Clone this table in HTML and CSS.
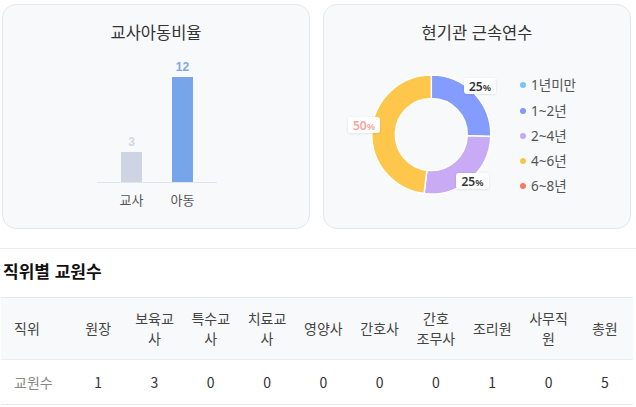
FILE: index.html
```html
<!DOCTYPE html>
<html lang="ko">
<head>
<meta charset="utf-8">
<title>교원 현황</title>
<link rel="stylesheet" href="styles.css">
</head>
<body>
<div class="charts">
  <section class="card">
    <h2 class="card-title">교사아동비율</h2>
    <svg class="chart" width="306" height="177" viewBox="0 0 306 177">
      <line x1="94" y1="131.5" x2="214" y2="131.5" stroke="#e1e4ea" stroke-width="1"/>
      <rect x="118" y="101" width="21" height="30" fill="#ced4e1"/>
      <rect x="169" y="26" width="21" height="105" fill="#76a6e9"/>
      <text class="val" x="128.5" y="95" fill="#d0d6e2">3</text>
      <text class="val" x="179.5" y="20" fill="#7fa7ea">12</text>
      <text class="axis" x="128.5" y="153.5">교사</text>
      <text class="axis" x="179.5" y="153.5">아동</text>
    </svg>
  </section>
  <section class="card">
    <h2 class="card-title">현기관 근속연수</h2>
    <svg class="chart" width="306" height="177" viewBox="0 0 306 177">
      <defs>
        <filter id="sh" x="-30%" y="-50%" width="160%" height="200%">
          <feDropShadow dx="0" dy="0.5" stdDeviation="1" flood-color="#000" flood-opacity="0.12"/>
        </filter>
      </defs>
      <g stroke="#ffffff" stroke-width="1.5" stroke-linejoin="round">
        <path d="M107.3 24 A59.5 59.5 0 0 1 166.76 85.58 L143.28 84.76 A36 36 0 0 0 107.3 47.5 Z" fill="#839cfd"/>
        <path d="M166.76 85.58 A59.5 59.5 0 0 1 100.05 142.56 L102.91 119.23 A36 36 0 0 0 143.28 84.76 Z" fill="#c8aaf5"/>
        <path d="M100.05 142.56 A59.5 59.5 0 0 1 107.3 24 L107.3 47.5 A36 36 0 0 0 102.91 119.23 Z" fill="#fec74c"/>
      </g>
      <rect x="140" y="27" width="32" height="16" rx="3" fill="#fff" filter="url(#sh)"/>
      <text class="pct" x="156" y="39.5" fill="#333">25<tspan class="pc">%</tspan></text>
      <rect x="132" y="122" width="33" height="16" rx="3" fill="#fff" filter="url(#sh)"/>
      <text class="pct" x="148.5" y="134.5" fill="#333">25<tspan class="pc">%</tspan></text>
      <rect x="24" y="66" width="32" height="16" rx="3" fill="#fff" filter="url(#sh)"/>
      <text class="pct" x="40" y="78.5" fill="#f7a39b">50<tspan class="pc">%</tspan></text>

      <circle cx="199" cy="34" r="3" fill="#7cc4fa"/>
      <text class="leg" x="207" y="39">1년미만</text>
      <circle cx="199" cy="60" r="3" fill="#8099fb"/>
      <text class="leg" x="207" y="65">1~2년</text>
      <circle cx="199" cy="85" r="3" fill="#c6a8f4"/>
      <text class="leg" x="207" y="90">2~4년</text>
      <circle cx="199" cy="110" r="3" fill="#fdc64b"/>
      <text class="leg" x="207" y="115">4~6년</text>
      <circle cx="199" cy="135" r="3" fill="#f87a63"/>
      <text class="leg" x="207" y="140">6~8년</text>
    </svg>
  </section>
</div>

<div class="divider"></div>

<h2 class="section-title">직위별 교원수</h2>

<table class="staff">
  <colgroup>
    <col class="c-first">
    <col><col><col><col><col><col><col><col><col><col>
  </colgroup>
  <thead>
    <tr>
      <th class="first">직위</th>
      <th>원장</th>
      <th>보육교사</th>
      <th>특수교사</th>
      <th>치료교사</th>
      <th>영양사</th>
      <th>간호사</th>
      <th class="keep">간호 조무사</th>
      <th>조리원</th>
      <th>사무직원</th>
      <th>총원</th>
    </tr>
  </thead>
  <tbody>
    <tr>
      <td class="first">교원수</td>
      <td>1</td>
      <td>3</td>
      <td>0</td>
      <td>0</td>
      <td>0</td>
      <td>0</td>
      <td>0</td>
      <td>1</td>
      <td>0</td>
      <td>5</td>
    </tr>
  </tbody>
</table>
</body>
</html>
```

FILE: styles.css
```css
* { box-sizing: border-box; }

body {
  margin: 0;
  background: #ffffff;
  font-family: "Noto Sans CJK KR", "Noto Sans", sans-serif;
  color: #333;
}

.charts {
  display: grid;
  grid-template-columns: 308px 308px;
  column-gap: 13px;
  padding: 4px 0 0 2px;
}

.card {
  height: 225px;
  background: #f8f9fb;
  border: 1px solid #e4e6ea;
  border-radius: 14px;
  overflow: hidden;
}

.card-title {
  margin: 0;
  padding: 16px 0 8px;
  height: 46px;
  font-size: 16.5px;
  line-height: 22px;
  font-weight: 400;
  text-align: center;
  color: #333;
}

.chart {
  display: block;
}

.val {
  font-family: "Liberation Sans", Arial, sans-serif;
  font-size: 12px;
  font-weight: 700;
  text-anchor: middle;
}

.axis {
  font-family: "Noto Sans CJK KR", sans-serif;
  font-size: 13px;
  fill: #555;
  text-anchor: middle;
}

.pct {
  font-family: "Noto Sans", "Liberation Sans", sans-serif;
  font-size: 12px;
  font-weight: 600;
  text-anchor: middle;
}

.pct .pc {
  font-size: 9.5px;
}

.leg {
  font-family: "Noto Sans", "Noto Sans CJK KR", sans-serif;
  font-size: 13.5px;
  fill: #555;
}

.divider {
  margin-top: 19px;
  border-top: 1px solid #ececec;
}

.section-title {
  margin: 0;
  padding: 10px 0 14px 3px;
  font-size: 17px;
  line-height: 24px;
  font-weight: 700;
  color: #111;
}

.staff {
  margin-left: 1px;
  width: 632px;
  table-layout: fixed;
  border-collapse: collapse;
  font-size: 14px;
  line-height: 20px;
}

.staff .c-first { width: 69px; }

.staff th {
  padding: 10px 6px 11px;
  font-weight: 400;
  color: #444;
  background: #f8f9fb;
  text-align: center;
  vertical-align: middle;
  border-top: 1px solid #e8e8ea;
  border-bottom: 1px solid #eeeeef;
}

.staff th.keep {
  word-break: keep-all;
}

.staff td {
  padding: 12px 6px;
  color: #333;
  text-align: center;
  border-bottom: 1px solid #e8e8ea;
}

.staff .first {
  text-align: left;
  padding-left: 13px;
}

.staff td.first {
  color: #888;
}
```
